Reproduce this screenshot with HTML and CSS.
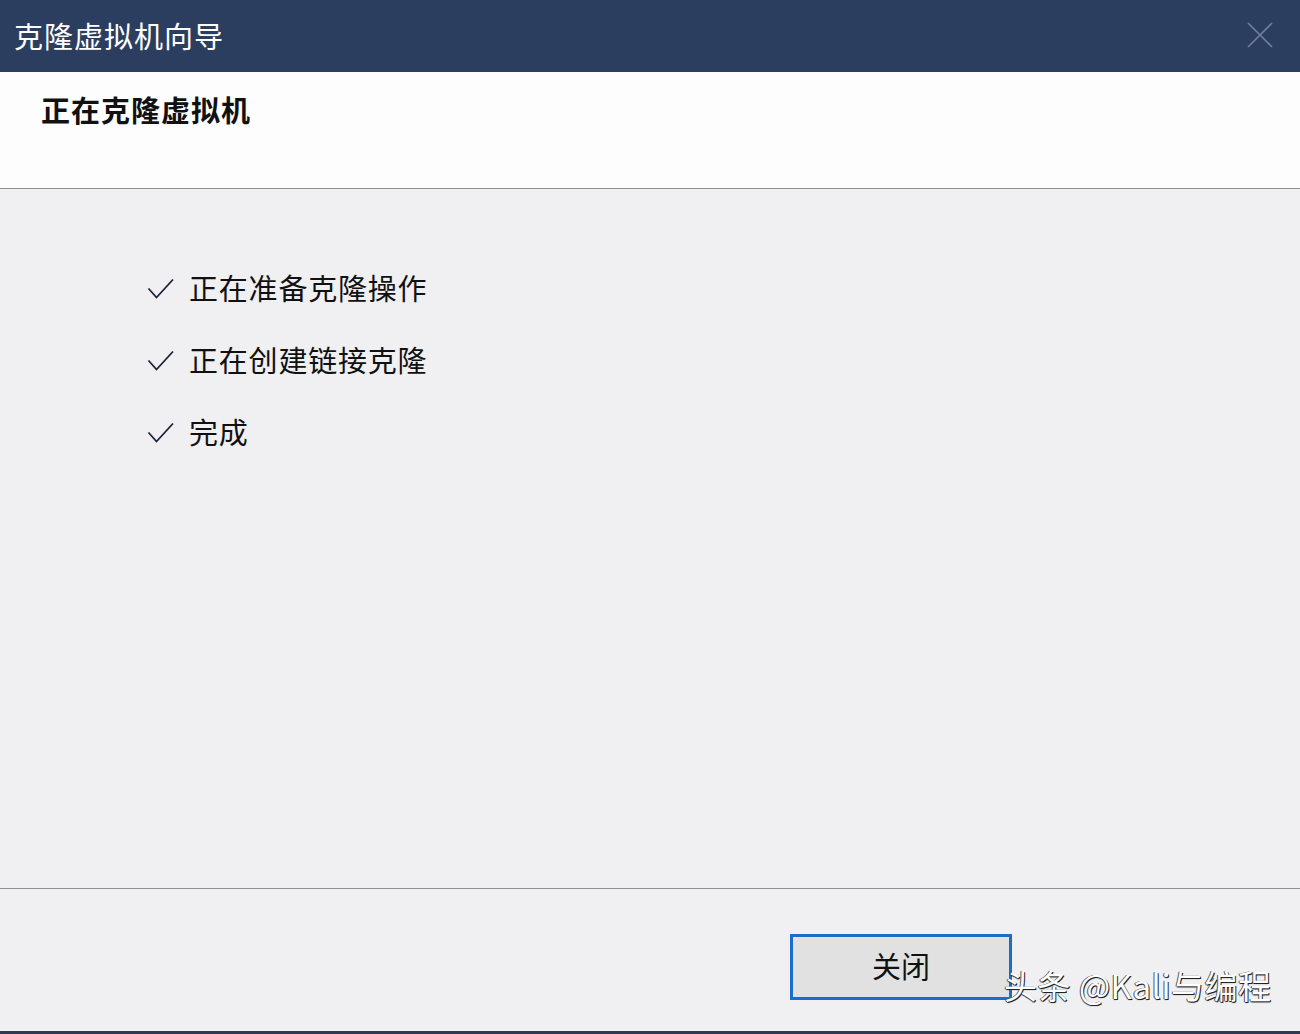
FILE: index.html
```html
<!DOCTYPE html>
<html lang="zh-CN">
<head>
<meta charset="utf-8">
<link rel="stylesheet" href="styles.css">
<title>克隆虚拟机向导</title>
</head>
<body>
<div class="window">
  <div class="titlebar">
    <span class="title">克隆虚拟机向导</span>
    <svg class="close" width="26" height="26" viewBox="0 0 26 26"><path d="M1 1L25 25M25 1L1 25" stroke="#6f7f9c" stroke-width="1.6" fill="none"/></svg>
  </div>
  <div class="header">
    <h1 class="heading">正在克隆虚拟机</h1>
  </div>
  <div class="content">
    <ul class="steps">
      <li class="step"><svg class="check" width="28" height="22" viewBox="0 0 28 22"><path d="M1.5 10.5L9.5 19.5L26 1.5" stroke="#1a2438" stroke-width="1.8" fill="none"/></svg><span>正在准备克隆操作</span></li>
      <li class="step"><svg class="check" width="28" height="22" viewBox="0 0 28 22"><path d="M1.5 10.5L9.5 19.5L26 1.5" stroke="#1a2438" stroke-width="1.8" fill="none"/></svg><span>正在创建链接克隆</span></li>
      <li class="step"><svg class="check" width="28" height="22" viewBox="0 0 28 22"><path d="M1.5 10.5L9.5 19.5L26 1.5" stroke="#1a2438" stroke-width="1.8" fill="none"/></svg><span>完成</span></li>
    </ul>
  </div>
  <div class="footer">
    <button class="btn">关闭</button>
    <span class="watermark">头条 @Kali与编程</span>
  </div>
</div>
</body>
</html>
```
FILE: styles.css
```css
* { box-sizing: border-box; }
html, body { margin: 0; padding: 0; }
body {
  width: 1300px;
  height: 1034px;
  overflow: hidden;
  font-family: "Noto Sans CJK SC", "Noto Sans", sans-serif;
  background: #f0eff1;
}
.window {
  display: flex;
  flex-direction: column;
  height: 1034px;
  border-bottom: 3px solid #2b3a55;
}
.titlebar {
  height: 72px;
  background: #2b3e60;
  display: flex;
  align-items: center;
  justify-content: space-between;
  padding: 0 27px 0 14px;
  flex: none;
}
.title {
  color: #ffffff;
  font-size: 29px;
  letter-spacing: 1px;
  line-height: 1;
  margin-top: -2px;
}
.close { display: block; margin-top: -2px; }
.header {
  height: 117px;
  background: #fdfdfe;
  border-bottom: 1px solid #8f9093;
  padding: 22px 0 0 41px;
  flex: none;
}
.heading {
  margin: 0;
  font-size: 29px;
  font-weight: 700;
  color: #111;
  line-height: 30px;
  letter-spacing: 1px;
}
.content {
  height: 700px;
  flex: none;
  border-bottom: 1px solid #8f9093;
  padding: 0 0 0 147px;
}
.steps {
  list-style: none;
  margin: 0;
  padding: 83px 0 0 0;
  display: flex;
  flex-direction: column;
  gap: 42px;
}
.step {
  display: flex;
  align-items: center;
  height: 30px;
  font-size: 29px;
  color: #111;
  letter-spacing: 0.8px;
}
.check { display: block; margin: 4px 14px 0 0; flex: none; }
.footer {
  flex: 1;
  position: relative;
  padding: 45px 0 0 790px;
}
.btn {
  width: 222px;
  height: 66px;
  background: #e1e1e2;
  border: 3px solid #1a6dcb;
  font-family: inherit;
  font-size: 29px;
  color: #111;
  padding: 0 0 3px 0;
  line-height: 1;
}
.watermark {
  position: absolute;
  left: 1004px;
  top: 72px;
  font-size: 33px;
  color: #ffffff;
  letter-spacing: 0.5px;
  white-space: nowrap;
  text-shadow: 1px 1px 0 #222, -1px 0 0 #555, 0 1px 1px #333;
}
```
